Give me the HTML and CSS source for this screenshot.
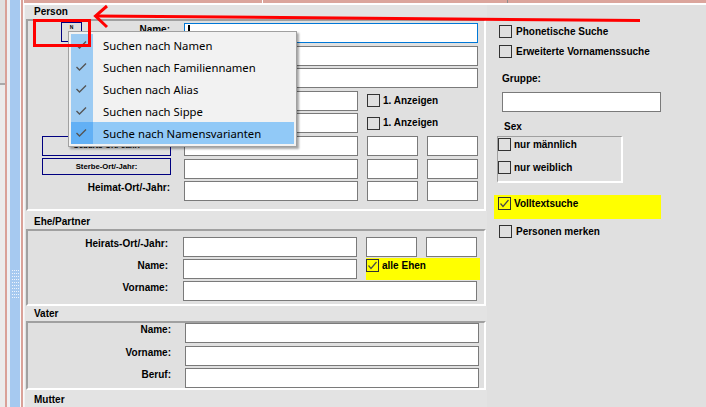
FILE: index.html
```html
<!DOCTYPE html>
<html lang="de">
<head>
<meta charset="utf-8">
<title>Personensuche</title>
<link rel="stylesheet" href="styles.css">
</head>
<body>
<div class="app">
  <div class="edge">
    <div class="e-grey"><div class="e-grey-top"></div></div>
    <div class="e-salmon"></div>
    <div class="e-light"></div>
    <div class="e-blue">
      <svg class="grip" width="10" height="30" viewBox="0 0 10 30">
        <defs><pattern id="dots" width="2" height="3" patternUnits="userSpaceOnUse"><rect width="1" height="1" fill="#eef4fc"/></pattern></defs>
        <rect x="2" y="0" width="8" height="30" fill="url(#dots)"/>
      </svg>
    </div>
    <div class="e-white"></div>
    <div class="e-salmon2"></div>
    <div class="e-white2"></div>
  </div>

  <div class="main">
    <div class="topbar">
      <div class="tb-salmon">
        <div class="tb-seg tb-a"></div><div class="tb-gap"></div><div class="tb-seg tb-b"></div><div class="tb-line"></div><div class="tb-seg tb-c"></div>
      </div>
      <div class="tb-white"></div>
    </div>

    <div class="content">
      <div class="left">
        <div class="ghead gh-person">Person</div>
        <div class="gbox gb-person">
          <div class="row">
            <div class="lbl lbl-n"><span class="nbtn">N</span><span class="lt">Name:</span></div>
            <div class="inp full focus"><span class="caret"></span></div>
          </div>
          <div class="row">
            <div class="lbl"></div>
            <div class="inp full"></div>
          </div>
          <div class="row">
            <div class="lbl"></div>
            <div class="inp full"></div>
          </div>
          <div class="row">
            <div class="lbl"></div>
            <div class="inp"></div>
            <div class="cbl c34"><span class="cb"></span><span>1. Anzeigen</span></div>
          </div>
          <div class="row">
            <div class="lbl"></div>
            <div class="inp"></div>
            <div class="cbl c34"><span class="cb"></span><span>1. Anzeigen</span></div>
          </div>
          <div class="row">
            <div class="lblcell"><div class="btn btn-geb">Geburts-Ort/-Jahr:</div></div>
            <div class="inp"></div><div class="inp"></div><div class="inp"></div>
          </div>
          <div class="row">
            <div class="lblcell"><div class="btn btn-ster">Sterbe-Ort/-Jahr:</div></div>
            <div class="inp"></div><div class="inp"></div><div class="inp"></div>
          </div>
          <div class="row">
            <div class="lbl">Heimat-Ort/-Jahr:</div>
            <div class="inp"></div><div class="inp"></div><div class="inp"></div>
          </div>
        </div>

        <div class="ghead gh-ehe">Ehe/Partner</div>
        <div class="gbox gb-ehe">
          <div class="row">
            <div class="lbl">Heirats-Ort/-Jahr:</div>
            <div class="inp"></div><div class="inp"></div><div class="inp"></div>
          </div>
          <div class="row">
            <div class="lbl">Name:</div>
            <div class="inp"></div>
            <div class="cbl c34 ehe-yel"><span class="cb"><svg class="tick" width="11" height="11" viewBox="0 0 11 11"><polyline points="1.5,5.5 4,8.5 9.5,2" /></svg></span><span>alle Ehen</span></div>
          </div>
          <div class="row">
            <div class="lbl">Vorname:</div>
            <div class="inp full"></div>
          </div>
        </div>

        <div class="ghead gh-vater">Vater</div>
        <div class="gbox gb-vater">
          <div class="row"><div class="lbl">Name:</div><div class="inp full"></div></div>
          <div class="row"><div class="lbl">Vorname:</div><div class="inp full"></div></div>
          <div class="row"><div class="lbl">Beruf:</div><div class="inp full"></div></div>
        </div>

        <div class="ghead gh-mutter">Mutter</div>
        <div class="gbox gb-mutter"></div>
      </div>

      <div class="right">
        <div class="cbl r-phon"><span class="cb"></span><span>Phonetische Suche</span></div>
        <div class="cbl r-erw"><span class="cb"></span><span>Erweiterte Vornamenssuche</span></div>
        <div class="r-gruppe-l">Gruppe:</div>
        <div class="inp r-gruppe"></div>
        <div class="sex-l">Sex</div>
        <div class="sexbox">
          <div class="cbl"><span class="cb"></span><span>nur männlich</span></div>
          <div class="cbl"><span class="cb"></span><span>nur weiblich</span></div>
        </div>
        <div class="cbl r-voll"><span class="cb"><svg class="tick" width="11" height="11" viewBox="0 0 11 11"><polyline points="1.5,5.5 4,8.5 9.5,2" /></svg></span><span>Volltextsuche</span></div>
        <div class="cbl r-merk"><span class="cb"></span><span>Personen merken</span></div>
      </div>
    </div>
  </div>

  <div class="menu">
    <div class="mi"><span class="mi-chk"><svg width="22" height="22" viewBox="0 0 22 22"><polyline points="5.5,11 8.5,14 15,7.5"/></svg></span><span class="mi-txt">Suchen nach Namen</span></div>
    <div class="mi"><span class="mi-chk"><svg width="22" height="22" viewBox="0 0 22 22"><polyline points="5.5,11 8.5,14 15,7.5"/></svg></span><span class="mi-txt">Suchen nach Familiennamen</span></div>
    <div class="mi"><span class="mi-chk"><svg width="22" height="22" viewBox="0 0 22 22"><polyline points="5.5,11 8.5,14 15,7.5"/></svg></span><span class="mi-txt">Suchen nach Alias</span></div>
    <div class="mi"><span class="mi-chk"><svg width="22" height="22" viewBox="0 0 22 22"><polyline points="5.5,11 8.5,14 15,7.5"/></svg></span><span class="mi-txt">Suchen nach Sippe</span></div>
    <div class="mi hot"><span class="mi-chk"><svg width="22" height="22" viewBox="0 0 22 22"><polyline points="5.5,11 8.5,14 15,7.5"/></svg></span><span class="mi-txt">Suche nach Namensvarianten</span></div>
  </div>

  <svg class="annot" width="706" height="407" viewBox="0 0 706 407">
    <rect x="34.5" y="20.5" width="55" height="25" fill="none" stroke="#ff0000" stroke-width="3"/>
    <line x1="96" y1="16" x2="640" y2="20.5" stroke="#ff0000" stroke-width="3"/>
    <polyline points="107,6 95.5,16 107,27" fill="none" stroke="#ff0000" stroke-width="3"/>
  </svg>
</div>
</body>
</html>
```

FILE: styles.css
```css
* { box-sizing: border-box; }
html, body { margin: 0; padding: 0; }
body {
  width: 706px;
  height: 407px;
  overflow: hidden;
  font-family: "Liberation Sans", Arial, sans-serif;
  font-size: 10px;
  color: #000;
  background: #e0e0e0;
}
.app { position: relative; display: flex; width: 706px; height: 407px; overflow: hidden; }

/* left decorative edge */
.edge { display: flex; height: 407px; flex: none; }
.e-grey { width: 5px; background: #ebebeb; display: flex; flex-direction: column; }
.e-grey-top { height: 85px; background: #e0e0e0; border-bottom: 2px solid #a9a9a9; }
.e-salmon { width: 2px; background: #d9a198; }
.e-light { width: 3px; background: #eef0f3; }
.e-blue { width: 10px; background: #a6c9f0; }
.grip { display: block; margin-top: 270px; }
.e-white { width: 1px; background: #fbfbfb; }
.e-salmon2 { width: 2px; background: #d9a198; }
.e-white2 { width: 1px; background: #fafafa; }

.main { flex: 1; display: flex; flex-direction: column; min-width: 0; }
.topbar { height: 5px; display: flex; flex-direction: column; flex: none; }
.tb-salmon { height: 3px; display: flex; }
.tb-seg { background: #dba59c; }
.tb-a { width: 238px; }
.tb-gap { width: 1px; background: #fff; }
.tb-b { width: 244px; }
.tb-line { width: 1px; background: #8c8c8c; }
.tb-c { flex: 1; }
.tb-white { height: 2px; background: #fff; }

.content { flex: 1; display: flex; border-left: 1px solid #f2f2f2; background: #e0e0e0; }
.left { width: 462px; flex: none; }

/* group headers and boxes */
.ghead {
  display: flex;
  align-items: flex-end;
  padding: 0 0 1px 9px;
  font-weight: bold;
  line-height: 12px;
  background: #e3e3e3;
}
.gh-person { height: 14px; }
.gh-ehe { height: 18px; }
.gh-vater { height: 15px; }
.gh-mutter { height: 17px; }

.gbox {
  margin-left: 1px;
  width: 460px;
  border-style: solid;
  border-width: 2px;
  border-color: #a0a0a0 #fff #fff #a0a0a0;
  background: #e0e0e0;
  display: flex;
  flex-direction: column;
}
.gb-person { height: 192px; padding-top: 2px; row-gap: 2.6px; }
.gb-ehe { height: 77px; padding-top: 6px; row-gap: 2px; }
.gb-vater { height: 69px; row-gap: 2.5px; }
.gb-mutter { height: 60px; }

.row {
  display: grid;
  grid-template-columns: 147px 174px 51px 51px;
  column-gap: 9px;
  height: 20px;
}
.gb-ehe .row { grid-template-columns: 146px 174px 51px 51px; }
.gb-vater .row { grid-template-columns: 148px 174px 51px 51px; }

.lbl {
  text-align: right;
  padding: 1px 5px 0 0;
  line-height: 12px;
  font-weight: bold;
  white-space: nowrap;
}
.gb-ehe .lbl { padding-right: 6px; }
.lbl-n { display: flex; align-items: flex-start; padding-top: 0; }
.lbl-n .lt { margin-left: auto; padding-top: 1px; }
.nbtn {
  margin: -1px 0 0 33px;
  width: 21px;
  height: 20px;
  border: 1px solid #000080;
  font-size: 5px;
  line-height: 5px;
  text-align: center;
  padding-top: 2px;
}
.lblcell { display: flex; align-items: flex-start; }

.btn {
  margin-left: 14px;
  width: 129px;
  border: 1px solid #000080;
  background: #e0e0e0;
  display: flex;
  align-items: center;
  justify-content: center;
  font-weight: bold;
  font-size: 7.7px;
}
.btn-geb { height: 20px; }
.btn-ster { height: 17px; margin-top: -1px; }

.inp { background: #fff; border: 1px solid #7a7a7a; height: 20px; }
.full { grid-column: 2 / 5; }
.focus { border-color: #0078d7; }
.caret { display: block; width: 2px; height: 9px; margin: 1px 0 0 3px; background: #000; }

/* checkboxes */
.cbl {
  display: flex;
  align-items: center;
  gap: 3px;
  font-weight: bold;
  line-height: 12px;
  white-space: nowrap;
}
.cb {
  width: 13px;
  height: 13px;
  border: 1px solid #333;
  flex: none;
  display: flex;
}
.tick polyline { fill: none; stroke: #4a4a4a; stroke-width: 1.2; }
.c34 { grid-column: 3 / 5; align-self: center; }
.ehe-yel {
  align-self: flex-start;
  align-items: flex-start;
  width: 114px;
  height: 22px;
  margin-top: -1px;
  padding-top: 1px;
  background: #ffff00;
}
.ehe-yel span:last-child { line-height: 13px; }

/* right column */
.right { flex: 1; display: flex; flex-direction: column; align-items: flex-start; }
.r-phon { margin: 20px 0 0 12px; gap: 4px; }
.r-erw { margin: 7px 0 0 12px; gap: 4px; }
.r-gruppe-l { margin: 15px 0 0 15px; font-weight: bold; line-height: 12px; }
.r-gruppe { margin: 7px 0 0 15px; width: 159px; }
.sex-l { margin: 9px 0 0 17px; font-weight: bold; line-height: 12px; }
.sexbox {
  margin: 3px 0 0 10px;
  width: 126px;
  height: 47px;
  border-style: solid;
  border-width: 1px 2px 2px 1px;
  border-color: #a0a0a0 #fff #fff #a0a0a0;
  padding-top: 1px;
  display: flex;
  flex-direction: column;
  row-gap: 10px;
}
.r-voll {
  margin: 12px 0 0 7px;
  width: 167px;
  height: 24px;
  padding: 2px 0 0 4px;
  align-items: flex-start;
  background: #ffff00;
}
.r-voll span:last-child { line-height: 13px; }
.r-merk { margin: 6px 0 0 12px; gap: 4px; }

/* context menu overlay */
.menu {
  position: absolute;
  left: 68px;
  top: 31px;
  width: 229px;
  border: 1px solid #a0a0a0;
  background: #f2f2f2;
  padding: 2px;
  box-shadow: 2px 2px 2px rgba(0, 0, 0, 0.35);
  font-family: "Noto Sans", "Open Sans", sans-serif;
  font-size: 11.3px;
  color: #000;
}
.mi { display: flex; align-items: center; height: 22px; }
.mi-chk { width: 22px; height: 22px; background: #9ccbf3; flex: none; display: block; }
.mi-chk svg { display: block; }
.mi-chk polyline { fill: none; stroke: #555; stroke-width: 1.4; }
.mi-txt { margin-left: 10px; white-space: nowrap; }
.mi.hot { background: #91c9f7; }
.mi.hot .mi-chk { background: #62b0f5; }

/* red annotation overlay */
.annot { position: absolute; left: 0; top: 0; pointer-events: none; }
```
